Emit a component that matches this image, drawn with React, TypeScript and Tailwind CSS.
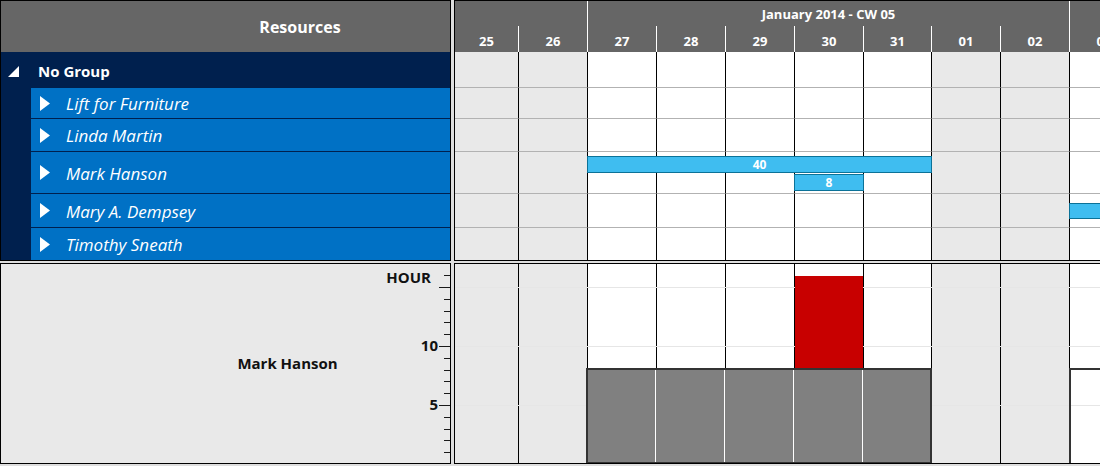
const days = [
  { d: '25', w: 'w-[64px]', we: true },
  { d: '26', w: 'w-[69px]', we: true },
  { d: '27', w: 'w-[69px]', we: false },
  { d: '28', w: 'w-[69px]', we: false },
  { d: '29', w: 'w-[69px]', we: false },
  { d: '30', w: 'w-[69px]', we: false },
  { d: '31', w: 'w-[68px]', we: false },
  { d: '01', w: 'w-[69px]', we: true },
  { d: '02', w: 'w-[69px]', we: true },
  { d: '03', w: 'w-[69px]', we: false },
];

const rows = [
  { name: '', h: 'h-[36px]' },
  { name: 'Lift for Furniture', h: 'h-[31px]' },
  { name: 'Linda Martin', h: 'h-[33px]' },
  { name: 'Mark Hanson', h: 'h-[42px]' },
  { name: 'Mary A. Dempsey', h: 'h-[34px]' },
  { name: 'Timothy Sneath', h: 'h-[32px]' },
];

// hour ticks on the load chart axis, 1..16
const ticks = Array.from({ length: 16 }, (_, i) => i + 1);

function Collapsed() {
  return (
    <svg width="10" height="15" viewBox="0 0 10 15" className="shrink-0">
      <polygon points="0,0 10,7.5 0,15" fill="white" />
    </svg>
  );
}

function Expanded() {
  return (
    <svg width="11" height="11" viewBox="0 0 11 11" className="shrink-0">
      <polygon points="11,0 11,11 0,11" fill="white" />
    </svg>
  );
}

function Bar({ className, label }: { className: string; label?: string }) {
  return (
    <div
      className={`absolute flex items-center justify-center bg-[#3fbdf0] border border-[#0b7298] text-white text-[12px] font-bold leading-none ${className}`}
    >
      {label}
    </div>
  );
}

export default function App() {
  return (
    <div className="w-[1100px] h-[466px] overflow-hidden bg-[#dedede] flex flex-col gap-[2px] font-['Open_Sans',sans-serif]">
      {/* top: resource tree + gantt */}
      <div className="h-[261px] flex gap-[3px] shrink-0">
        <div className="w-[451px] shrink-0 border border-black flex flex-col bg-[#00204e]">
          <div className="h-[51px] bg-[#666666] flex items-center justify-center pl-[149px] text-white text-[16px] font-bold">
            Resources
          </div>
          {rows.map((r, i) =>
            i === 0 ? (
              <div key={i} className={`${r.h} flex items-center pl-[7px] pt-[2px] gap-[19px] text-white text-[15px] font-bold`}>
                <Expanded />
                <span>No Group</span>
              </div>
            ) : (
              <div key={i} className={`${r.h} flex pl-[30px]`}>
                <div
                  className={`flex-1 flex items-center bg-[#0071c5] pl-[9px] gap-[16px] text-white text-[17px] italic ${
                    i < rows.length - 1 ? 'border-b border-[#00204e]' : ''
                  }`}
                >
                  <Collapsed />
                  <span className="pt-[2px]">{r.name}</span>
                </div>
              </div>
            )
          )}
        </div>

        <div className="flex-1 border-y border-l border-black flex flex-col overflow-hidden">
          <div className="h-[51px] bg-[#666666] flex flex-col text-white font-bold shrink-0">
            <div className="h-[25px] flex">
              <div className="w-[133px] shrink-0 border-r border-white" />
              <div className="w-[482px] shrink-0 border-r border-white flex items-center justify-center text-[13px] pt-[2px]">
                January 2014 - CW 05
              </div>
              <div className="flex-1" />
            </div>
            <div className="h-[26px] flex">
              {days.map((d) => (
                <div
                  key={d.d}
                  className={`${d.w} shrink-0 border-r border-white flex items-center justify-center text-[13px] pt-[5px]`}
                >
                  {d.d}
                </div>
              ))}
            </div>
          </div>

          {rows.map((r, i) => (
            <div key={i} className={`${r.h} flex relative shrink-0`}>
              {days.map((d) => (
                <div
                  key={d.d}
                  className={`${d.w} shrink-0 border-r border-black ${d.we ? 'bg-[#e9e9e9]' : 'bg-white'} ${
                    i < rows.length - 1 ? 'border-b border-b-[#b2b2b2]' : ''
                  }`}
                />
              ))}
              {i === 3 && (
                <>
                  <Bar className="left-[132px] top-[4px] w-[345px] h-[17px]" label="40" />
                  <Bar className="left-[339px] top-[22px] w-[70px] h-[17px]" label="8" />
                </>
              )}
              {i === 4 && <Bar className="left-[614px] top-[9px] w-[40px] h-[16px]" />}
            </div>
          ))}
        </div>
      </div>

      {/* bottom: load chart */}
      <div className="h-[201px] flex gap-[3px] shrink-0">
        <div className="w-[451px] shrink-0 border border-black bg-[#e9e9e9] flex">
          <div className="flex-1 flex items-center justify-center pl-[158px] text-[15px] font-bold text-[#111]">
            Mark Hanson
          </div>
          <div className="w-[22px] relative text-[15px] font-bold text-[#111] leading-none">
            <span className="absolute right-[7px] top-[6px]">HOUR</span>
            <span className="absolute right-0 top-[74px]">10</span>
            <span className="absolute right-0 top-[133px]">5</span>
          </div>
          <svg width="12" height="199" className="shrink-0">
            {ticks.map((h) => {
              const y = Math.round(200 - h * 11.8) + 0.5;
              const major = h % 5 === 0;
              return <line key={h} x1={major ? 1 : 6} x2={12} y1={y} y2={y} stroke="#1a1a1a" strokeWidth="1" />;
            })}
          </svg>
        </div>

        <div className="flex-1 border-y border-l border-black flex relative overflow-hidden">
          {days.map((d) => (
            <div
              key={d.d}
              className={`${d.w} shrink-0 border-r border-black ${d.we ? 'bg-[#e9e9e9]' : 'bg-white'}`}
            />
          ))}
          <div className="absolute inset-x-0 top-[23px] h-px bg-[#e6e6e6]" />
          <div className="absolute inset-x-0 top-[82px] h-px bg-[#e6e6e6]" />
          <div className="absolute inset-x-0 top-[141px] h-px bg-[#e6e6e6]" />

          <div className="absolute left-[340px] top-[12px] w-[68px] h-[92px] bg-[#c80000]" />
          <div className="absolute left-[131px] top-[104px] bottom-[-1px] w-[346px] border-2 border-[#333333] bg-[#808080] flex">
            <div className="w-[68px] border-r border-white" />
            <div className="w-[69px] border-r border-white" />
            <div className="w-[69px] border-r border-white" />
            <div className="w-[69px] border-r border-white" />
            <div className="flex-1" />
          </div>
          <div className="absolute left-[614px] top-[104px] bottom-0 right-0 border-l-2 border-t-2 border-[#333333] bg-white">
            <div className="absolute inset-x-0 top-[35px] h-px bg-[#e6e6e6]" />
          </div>
        </div>
      </div>
    </div>
  );
}
